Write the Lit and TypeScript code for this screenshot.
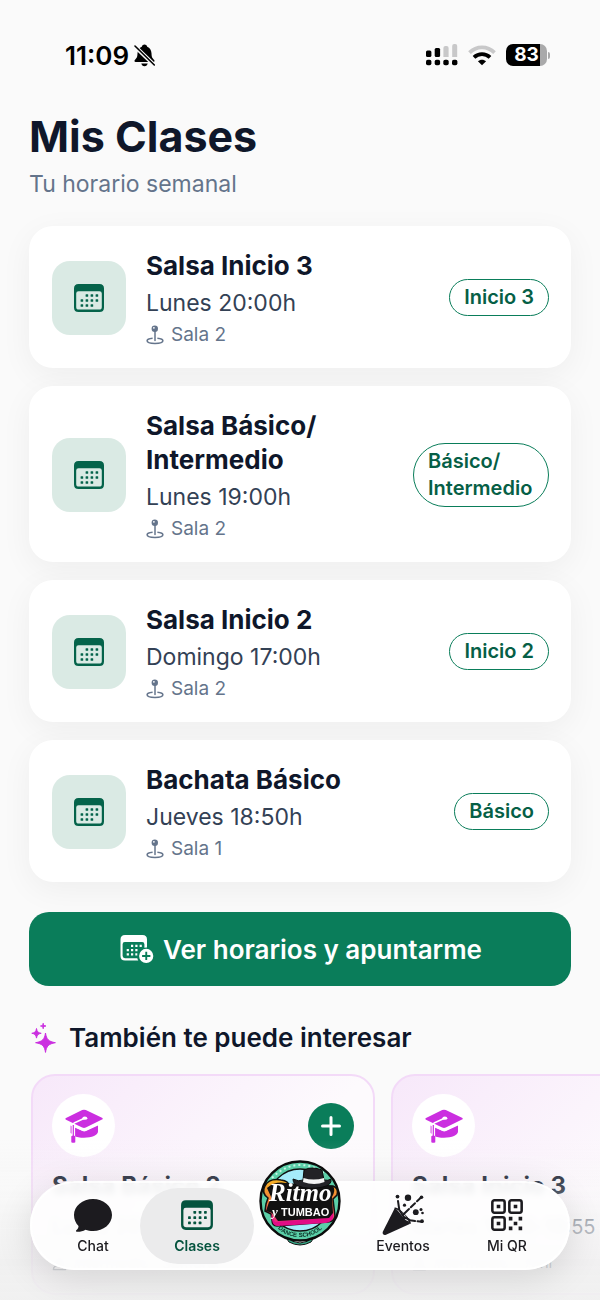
import { LitElement, html, css, svg } from 'lit';
import { customElement } from 'lit/decorators.js';

interface ClassItem {
  title: string;
  time: string;
  room: string;
  level: string;
}

interface Suggestion {
  title: string;
  time: string;
  teacher: string;
}

const CLASSES: ClassItem[] = [
  { title: 'Salsa Inicio 3', time: 'Lunes 20:00h', room: 'Sala 2', level: 'Inicio 3' },
  { title: 'Salsa Básico/ Intermedio', time: 'Lunes 19:00h', room: 'Sala 2', level: 'Básico/ Intermedio' },
  { title: 'Salsa Inicio 2', time: 'Domingo 17:00h', room: 'Sala 2', level: 'Inicio 2' },
  { title: 'Bachata Básico', time: 'Jueves 18:50h', room: 'Sala 1', level: 'Básico' },
];

const SUGGESTIONS: Suggestion[] = [
  { title: 'Salsa Básico 2', time: 'Lunes 20:55–21:50', teacher: 'Intermedio · Samurai' },
  { title: 'Salsa Inicio 3', time: 'Martes 19:00–19:55', teacher: 'Intermedio · Yoni' },
];

const dots = svg`
  <rect x="12.6" y="11.2" width="2.6" height="2.6" rx=".6"/><rect x="17.6" y="11.2" width="2.6" height="2.6" rx=".6"/><rect x="22.6" y="11.2" width="2.6" height="2.6" rx=".6"/>
  <rect x="7.6" y="16.2" width="2.6" height="2.6" rx=".6"/><rect x="12.6" y="16.2" width="2.6" height="2.6" rx=".6"/><rect x="17.6" y="16.2" width="2.6" height="2.6" rx=".6"/><rect x="22.6" y="16.2" width="2.6" height="2.6" rx=".6"/>
  <rect x="7.6" y="21.2" width="2.6" height="2.6" rx=".6"/><rect x="12.6" y="21.2" width="2.6" height="2.6" rx=".6"/><rect x="17.6" y="21.2" width="2.6" height="2.6" rx=".6"/>`;

const calendarIcon = html`
  <svg class="calendar" viewBox="0 0 32 30" fill="currentColor" aria-hidden="true">
    <path fill-rule="evenodd" d="M5.5 1h21Q31 1 31 5.500v19Q31 29 26.500 29h-21Q1 29 1 24.500v-19Q1 1 5.500 1zM5.500 8.200Q3.200 8.200 3.200 10.500v13.500Q3.200 26.600 5.800 26.600h20.400Q28.800 26.600 28.800 24v-13.500Q28.800 8.200 26.500 8.200z"/>
    ${dots}
  </svg>`;

const calendarPlusIcon = html`
  <svg class="calendar-plus" viewBox="0 0 37 30" fill="currentColor" aria-hidden="true">
    <path fill-rule="evenodd" d="M7 1h17.500Q29 1 29 5.500v8a9 9 0 0 0-2.600.2V10.200Q26.400 8 24.200 8H6.800Q4.600 8 4.600 10.200v11.600Q4.600 24.200 7 24.200h12.300q.3 1.300 1 2.400H7Q2.500 26.600 2.500 22.100V5.500Q2.500 1 7 1z"/>
    <path d="M13 10.700h2.200v2.200H13zM17.300 10.700h2.200v2.200h-2.200zM21.600 10.700h2.200v2.200h-2.200zM8.700 15h2.200v2.200H8.700zM13 15h2.200v2.200H13zM17.300 15h2.200v2.200h-2.200zM8.700 19.300h2.200v2.200H8.700zM13 19.300h2.200v2.200H13zM17.300 19.300h2v2.200h-2z"/>
    <path fill-rule="evenodd" d="M28.200 14.800a7.100 7.100 0 1 1 0 14.200a7.100 7.100 0 0 1 0-14.200zM27.300 17.800v3.200h-3.200v1.900h3.200V26h1.900v-3.100h3.200V21h-3.200v-3.200z"/>
  </svg>`;

const pinIcon = html`
  <svg class="pin" viewBox="0 0 18 20" fill="none" stroke="currentColor" stroke-width="1.500" aria-hidden="true">
    <path d="M6.600 13.200C3.200 13.500 1.100 14.500 1.100 15.800c0 1.500 3.300 2.600 7.900 2.600s7.900-1.100 7.900-2.600c0-1.300-2.100-2.300-5.500-2.600"/>
    <path d="M9 6v9.500" stroke-linecap="round"/>
    <circle cx="8.800" cy="3.700" r="3.200" fill="currentColor" stroke="none"/>
    <circle cx="7.900" cy="2.800" r=".9" fill="#fff" stroke="none"/>
  </svg>`;

const personIcon = html`
  <svg class="person" viewBox="0 0 16 16" fill="none" stroke="currentColor" stroke-width="1.500" aria-hidden="true">
    <circle cx="8" cy="4.500" r="3"/>
    <path d="M1.500 14.500c0-6.500 13-6.500 13 0z" stroke-linejoin="round"/>
  </svg>`;

const capIcon = html`
  <svg class="cap" viewBox="0 0 38 34" fill="#cb2ee0" aria-hidden="true">
    <path d="M5.600 16l4.400 2v9l-4.400-3z"/>
    <path d="M9 18l8.500 4q1.700.8 3.500 0l12-5.500v6c0 3.600-6 6.200-14 6.200-4 0-7.600-.6-10-2z"/>
    <path d="M5 15.500l12.200 5.300q1.800.8 3.600 0L33 15" fill="none" stroke="#fff" stroke-width="1.500"/>
    <path d="M17.200 1.100q1.800-.8 3.600 0L37 8.800q1.500.9 0 1.800l-16.200 8q-1.800.9-3.600 0L1 10.800q-1.400-1 0-1.900z"/>
    <path d="M8.300 15V28" fill="none" stroke="#fff" stroke-width="3.600"/>
    <path d="M19.500 9.300L9.600 13.700Q8.300 14.300 8.300 15.800" fill="none" stroke="#fff" stroke-width="1.500"/>
    <path d="M8.300 16V27.500" fill="none" stroke="#cb2ee0" stroke-width="1.200"/>
    <ellipse cx="19.800" cy="9.200" rx="2.500" ry="1.600" fill="#fff"/>
    <path d="M6.300 27.200q2-1.400 4 0v6q-2 1.300-4 0z"/>
  </svg>`;

const sparklesIcon = html`
  <svg class="sparkles" viewBox="0 0 26 32" fill="#cb2ee0" stroke="#cb2ee0" stroke-linejoin="round" aria-hidden="true">
    <path d="M14.500 11c.9 6.200 3 8.600 9.900 9.700-6.900 1.100-9 3.500-9.900 9.700-.9-6.200-3-8.600-9.900-9.700 6.900-1.100 9-3.500 9.900-9.700z"/>
    <path d="M5.500 6.500c.5 3.200 1.500 4.300 4.700 4.800-3.200.5-4.200 1.600-4.700 4.800-.5-3.200-1.500-4.300-4.700-4.800 3.200-.5 4.200-1.600 4.700-4.800z"/>
    <path d="M12.200 1.300c.3 1.800.8 2.400 2.700 2.700-1.900.3-2.400.9-2.700 2.700-.3-1.800-.8-2.400-2.700-2.700 1.900-.3 2.400-.9 2.700-2.700z"/>
  </svg>`;

const plusIcon = html`
  <svg class="plus" viewBox="0 0 20 20" stroke="#fff" stroke-width="3" stroke-linecap="round" aria-hidden="true">
    <path d="M10 1.500v17M1.500 10h17"/>
  </svg>`;

const bellOffIcon = html`
  <svg class="bell" viewBox="0 0 21 23" aria-hidden="true">
    <path d="M10.500 .5C12 .5 13 1.500 13.200 2.700c2.700.9 4.200 3.500 4.300 6.600.1 4 .9 5 2.500 6.400.9.900.6 2.300-.6 2.300H1.600C.4 18 .1 16.600 1 15.700 2.600 14.300 3.400 13.300 3.500 9.300c.1-3.100 1.600-5.700 4.300-6.600C8 1.500 9 .5 10.500.5zM7.300 19.600h6.400c-.3 1.700-1.500 2.600-3.200 2.600s-2.900-.9-3.200-2.600z"/>
    <path d="M.5 2L20.500 21.400" stroke="#fafafa" stroke-width="4"/>
    <path d="M1 2L20.300 21" stroke="#000" stroke-width="1.600" stroke-linecap="round"/>
  </svg>`;

const signalIcon = html`
  <svg class="signal" viewBox="0 0 32 22" aria-hidden="true">
    <path fill="#c8c8c9" d="M17.400 4a2 2 0 0 1 2-2h1.200a2 2 0 0 1 2 2v9h-5.200zM26.200 2a2 2 0 0 1 2-2h1a2 2 0 0 1 2 2v11h-5z"/>
    <rect y="6.500" width="5.400" height="6.500" rx="1.500"/><rect x="8.700" y="4" width="5.400" height="9" rx="1.500"/>
    <rect y="15.700" width="5.400" height="5.600" rx="1.800"/><rect x="8.700" y="15.700" width="5.400" height="5.600" rx="1.800"/><rect x="17.300" y="15.700" width="5.400" height="5.600" rx="1.800"/><rect x="26" y="15.700" width="5.400" height="5.600" rx="1.800"/>
  </svg>`;

const wifiIcon = html`
  <svg class="wifi" viewBox="0 0 28 21" fill="none" stroke-width="3.800" aria-hidden="true">
    <path d="M1.500 7.700C8.600.7 19.400.7 26.500 7.700" stroke="#c8c8c9"/>
    <path d="M6 12.300c4.600-4.300 11.400-4.300 16 0" stroke="#000"/>
    <path d="M14 20.300l-4.100-4c2.300-2.100 5.900-2.100 8.200 0z" fill="#000"/>
  </svg>`;

const chatIcon = html`
  <svg class="tab-icon" viewBox="0 0 40 34" fill="currentColor" aria-hidden="true">
    <path d="M20 1C30.500 1 39 8 39 17s-8.500 16-19 16c-2.700 0-5.200-.5-7.500-1.300-2.700 1.500-5.700 2.200-8.700 2-1-.1-1.200-.9-.5-1.500 1.600-1.300 2.300-2.700 2.200-4.200C2.700 25.200 1 21.300 1 17 1 8 9.500 1 20 1z"/>
  </svg>`;

const partyIcon = html`
  <svg class="tab-icon party" viewBox="0 0 42 42" fill="currentColor" aria-hidden="true">
    <path d="M12.600 14.500C18 16.500 25 23.500 27.700 30L4 40.700c-2.200.9-4-.8-3.200-3z"/>
    <path d="M12.600 14.500c3.500-1.500 15.500 11.500 15.400 15.200" fill="none" stroke="currentColor" stroke-width="1.800"/>
    <path d="M15 15.800c5.500 1.900 10 7 11.600 11.300-2.300-.2-3.800-1.700-5-3.300" fill="#fafafb"/>
    <path d="M16 7l1.300 9 3.500 5.500M39 3.500l-4 3.800M33 9.200l-4.200 4M27 15l-6.200 6 1.800 3.500M40 27.700l-4.500-.4M33 27l-5-.8-5.500-3" fill="none" stroke="currentColor" stroke-width="2" stroke-linecap="round"/>
    <circle cx="15.500" cy="2.600" r="1.900"/><circle cx="26" cy="3.800" r="3.200"/><circle cx="39.500" cy="3.200" r="1.800"/><circle cx="22.500" cy="11.200" r="1.600"/>
    <circle cx="33.800" cy="18.200" r="2.900"/><circle cx="39" cy="15.500" r="1.500"/><circle cx="40.500" cy="19" r="1.300"/><circle cx="40" cy="27.200" r="1.900"/>
  </svg>`;

const qrIcon = html`
  <svg class="tab-icon qr" viewBox="0 0 32 32" fill="currentColor" aria-hidden="true">
    <g fill="none" stroke="currentColor" stroke-width="2.400">
      <rect x="2.200" y="2.200" width="11.600" height="11.600" rx="2"/><rect x="18.200" y="2.200" width="11.600" height="11.600" rx="2"/><rect x="2.200" y="18.200" width="11.600" height="11.600" rx="2"/>
    </g>
    <path d="M6.300 6.300h3.400v3.400H6.300zM22.300 6.300h3.400v3.400h-3.400zM6.300 22.300h3.400v3.400H6.300zM17.700 17.700h3.400v3.400h-3.400zM26.900 17.700h3.400v3.400h-3.400zM22.300 22.300h3.400v3.400h-3.400zM17.700 26.900h3.400v3.400h-3.400zM26.900 26.900h3.400v3.400h-3.400z"/>
  </svg>`;

const schoolLogo = html`
  <svg class="logo" viewBox="0 0 82 86" aria-hidden="true">
    <defs>
      <linearGradient id="lettering" x1="0" y1="0" x2="0" y2="1">
        <stop offset="0" stop-color="#f5b325"/><stop offset=".5" stop-color="#f47a3c"/><stop offset="1" stop-color="#e6168b"/>
      </linearGradient>
      <path id="ring-bottom" d="M11 57Q20 77 41 77T71 57"/>
    </defs>
    <path d="M26 76q15 14 30 0l-4 6q-11 6-22 0z" fill="#35a886" stroke="#111" stroke-width="1"/>
    <circle cx="41" cy="41" r="39.500" fill="#5bcfa8" stroke="#0b0b0b" stroke-width="2.400"/>
    <circle cx="41" cy="40" r="31" fill="#a5ecfb" stroke="#111" stroke-width="1.300"/>
    <path d="M13 18Q26 5 41 5T67 15" fill="none" stroke="#c9f5e4" stroke-width="2" stroke-dasharray="2 3"/>
    <path d="M6 26q4-8 16-6 8 1 8 6l16-1 28 1q6 2 4 9l-4 4 2 17q-1 6-7 6l-51 4q-5 0-5-6l-1-6-6-3 1-7 2-6q-7-5-3-12z" fill="url(#lettering)" stroke="#111" stroke-width="1.500"/>
    <path d="M12 54l4 8 52-4 6-6v5q-1 5-7 6l-48 3q-5 0-6-6z" fill="#e20c86"/>
    <path d="M8 28q8-7 19-5l47 3q3 4-1 11l1 16-4 5-51 3-6-8-6-2 3-9 3-3z" fill="#111"/>
    <path d="M34 19q6 3 10 1l1-10q8-4 18 0l2 10q4 1 7-1 1 6-8 8-15 3-25-1-5-2-5-7z" fill="#222226" stroke="#0b0b0b"/>
    <path d="M44.500 18q10 3 20.500 0l.500 4q-10 4-21.500 0z" fill="#f3f3f3"/>
    <text x="10" y="41" class="logo-script">Ritmo</text>
    <text x="13" y="56" class="logo-small">y</text>
    <text x="22" y="56" class="logo-block">TUMBAO</text>
    <text class="logo-ring"><textPath href="#ring-bottom" startOffset="50%" text-anchor="middle">DANCE SCHOOL</textPath></text>
  </svg>`;

@customElement('app-root')
export class AppRoot extends LitElement {
  static override styles = css`
    :host {
      display: block;
      min-height: 100vh;
      overflow: hidden;
      background: #fafafa;
      color: #0f172a;
      font-family: Inter, "Liberation Sans", sans-serif;
    }

    * { box-sizing: border-box; }
    h1, h2, h3, p { margin: 0; }
    svg { display: block; flex: none; }
    button { font: inherit; border: 0; cursor: pointer; }

    .status {
      display: flex;
      align-items: center;
      justify-content: space-between;
      height: 110px;
      padding: 0 50px 0 65px;
      color: #000;
    }

    .clock { display: flex; align-items: center; gap: 5px; font-size: 26px; font-weight: 600; }
    .bell { width: 21px; height: 23px; }
    .indicators { display: flex; align-items: center; gap: 10px; }
    .signal { width: 32px; height: 22px; }
    .wifi { width: 28px; height: 21px; }
    .battery { display: flex; align-items: center; gap: 1px; }
    .battery-body {
      width: 41px;
      border-radius: 7px;
      background: linear-gradient(90deg, #000 83%, #a9a9aa 83%);
      color: #fff;
      font-size: 19px;
      font-weight: 700;
      line-height: 22px;
      text-align: center;
    }
    .battery-tip { width: 2px; height: 7px; border-radius: 0 2px 2px 0; background: #a9a9aa; }

    .content { padding: 0 29px; }
    h1 { font-size: 43px; font-weight: 700; line-height: 52px; }
    .subtitle { margin-top: 8px; color: #64748b; font-size: 23px; line-height: 28px; }

    .classes { display: grid; gap: 18px; margin: 28px 0 30px; padding: 0; list-style: none; }
    .class-card {
      display: flex;
      align-items: center;
      gap: 20px;
      padding: 23px 22px 22px 23px;
      border-radius: 24px;
      background: #fff;
      box-shadow: 0 8px 32px rgba(0, 0, 0, 0.05);
    }
    .class-icon {
      display: grid;
      flex: none;
      place-items: center;
      width: 74px;
      height: 74px;
      border-radius: 18px;
      background: #daeae4;
      color: #04634a;
    }
    .calendar { width: 32px; height: 30px; }
    .class-info { display: grid; flex: 1 1 0; gap: 5px; }
    .class-info h2 { max-width: 220px; font-size: 26px; font-weight: 700; line-height: 34px; }
    .time { color: #334155; font-size: 23px; line-height: 30px; }
    .room { display: flex; align-items: center; gap: 7px; color: #64748b; font-size: 19px; line-height: 23px; }
    .pin { width: 18px; height: 20px; }
    .level {
      max-width: 136px;
      padding: 4px 14px;
      border: 1px solid #0a7d5a;
      border-radius: 32px;
      color: #065f46;
      font-size: 20px;
      font-weight: 600;
      line-height: 27px;
    }

    .schedule {
      display: flex;
      align-items: center;
      justify-content: center;
      gap: 8px;
      width: 100%;
      height: 74px;
      border-radius: 20px;
      background: #0a7d5a;
      color: #fff;
      font-size: 26px;
      font-weight: 600;
    }
    .calendar-plus { width: 37px; height: 30px; }

    .suggested-title {
      display: flex;
      align-items: center;
      gap: 12px;
      margin: 34px 2px 18px;
      font-size: 26px;
      font-weight: 600;
      line-height: 36px;
    }
    .sparkles { width: 26px; height: 32px; }

    .carousel {
      display: flex;
      gap: 16px;
      padding: 0 31px;
      overflow-x: auto;
      scrollbar-width: none;
    }
    .suggestion {
      flex: none;
      width: 344px;
      padding: 18px 19px;
      border: 2px solid #f3daf8;
      border-radius: 24px;
      background: linear-gradient(135deg, #f7e8fa, #fdfafd 60%);
    }
    .suggestion-top { display: flex; align-items: center; justify-content: space-between; margin-bottom: 14px; }
    .badge { display: grid; place-items: center; width: 63px; height: 63px; border-radius: 50%; background: #fff; }
    .cap { width: 38px; height: 34px; }
    .add { display: grid; place-items: center; width: 46px; height: 46px; padding: 0; border-radius: 50%; background: #0a7d5a; }
    .plus { width: 20px; height: 20px; }
    .suggestion h3 { font-size: 24px; font-weight: 700; line-height: 30px; }
    .suggestion p { color: #334155; white-space: nowrap; }
    .suggestion .when { margin-top: 12px; font-size: 20px; line-height: 28px; }
    .suggestion .teacher {
      display: flex;
      align-items: center;
      gap: 6px;
      margin-top: 10px;
      font-size: 15px;
      line-height: 24px;
    }
    .person { width: 15px; height: 15px; }

    /* fades the page out behind the floating bar */
    .fade {
      position: fixed;
      inset: auto 0 0;
      height: 160px;
      background: linear-gradient(
        rgba(245, 245, 245, 0),
        rgba(245, 245, 245, 0.25) 30%,
        rgba(242, 242, 242, 0.65) 52%,
        rgba(238, 238, 238, 0.82) 78%,
        rgba(240, 240, 240, 0.94)
      );
      pointer-events: none;
    }

    .tabs {
      position: fixed;
      inset: auto 30px 30px;
      display: grid;
      grid-template-columns: 94px 114px 1fr 114px 94px;
      grid-template-rows: 89px;
      align-items: center;
      padding: 0 16px;
      border-radius: 45px;
      background: rgba(254, 254, 254, 0.92);
      box-shadow: 0 8px 36px rgba(0, 0, 0, 0.12), inset 0 0 0 2px rgba(255, 255, 255, 0.8);
      backdrop-filter: blur(3px);
    }
    .tab {
      display: flex;
      flex-direction: column;
      align-items: center;
      gap: 5px;
      height: 76px;
      padding-top: 10px;
      border-radius: 38px;
      color: #1c1b1f;
      font-size: 14px;
      font-weight: 500;
      line-height: 18px;
      text-decoration: none;
    }
    .tab.active { background: #ebebec; color: #04533e; font-weight: 600; }
    .tab-icon { width: 40px; height: 34px; }
    .tab .calendar { width: 34px; height: 34px; }
    .tab .party { width: 42px; height: 42px; margin: -4px 0; }
    .qr { width: 34px; height: 34px; }
    .home { justify-self: center; margin-bottom: 46px; }
    .logo { width: 82px; height: 86px; }
    .logo-script { fill: #fff; font: italic 700 25px "Liberation Serif", serif; }
    .logo-small { fill: #fff; font: italic 700 13px "Liberation Serif", serif; }
    .logo-block { fill: #fff; font: 700 11px "Liberation Sans", sans-serif; }
    .logo-ring { fill: #0b2c22; font: 700 6px "Liberation Sans", sans-serif; }
  `;

  private renderClass(item: ClassItem) {
    return html`
      <li class="class-card">
        <span class="class-icon">${calendarIcon}</span>
        <div class="class-info">
          <h2>${item.title}</h2>
          <p class="time">${item.time}</p>
          <p class="room">${pinIcon}${item.room}</p>
        </div>
        <span class="level">${item.level}</span>
      </li>
    `;
  }

  private renderSuggestion(item: Suggestion) {
    return html`
      <article class="suggestion">
        <div class="suggestion-top">
          <span class="badge">${capIcon}</span>
          <button class="add" aria-label="Apuntarme a ${item.title}">${plusIcon}</button>
        </div>
        <h3>${item.title}</h3>
        <p class="when">${item.time}</p>
        <p class="teacher">${personIcon}${item.teacher}</p>
      </article>
    `;
  }

  override render() {
    return html`
      <header class="status">
        <span class="clock">11:09 ${bellOffIcon}</span>
        <span class="indicators">
          ${signalIcon} ${wifiIcon}
          <span class="battery"><span class="battery-body">83</span><span class="battery-tip"></span></span>
        </span>
      </header>
      <main>
        <div class="content">
          <h1>Mis Clases</h1>
          <p class="subtitle">Tu horario semanal</p>
          <ul class="classes">${CLASSES.map((c) => this.renderClass(c))}</ul>
          <button class="schedule">${calendarPlusIcon} Ver horarios y apuntarme</button>
          <h2 class="suggested-title">${sparklesIcon} También te puede interesar</h2>
        </div>
        <div class="carousel">${SUGGESTIONS.map((s) => this.renderSuggestion(s))}</div>
      </main>
      <div class="fade"></div>
      <nav class="tabs">
        <a class="tab" href="#chat">${chatIcon} Chat</a>
        <a class="tab active" href="#clases" aria-current="page">${calendarIcon} Clases</a>
        <a class="home" href="#inicio" aria-label="Ritmo y Tumbao">${schoolLogo}</a>
        <a class="tab" href="#eventos">${partyIcon} Eventos</a>
        <a class="tab" href="#qr">${qrIcon} Mi QR</a>
      </nav>
    `;
  }
}

export default AppRoot;
